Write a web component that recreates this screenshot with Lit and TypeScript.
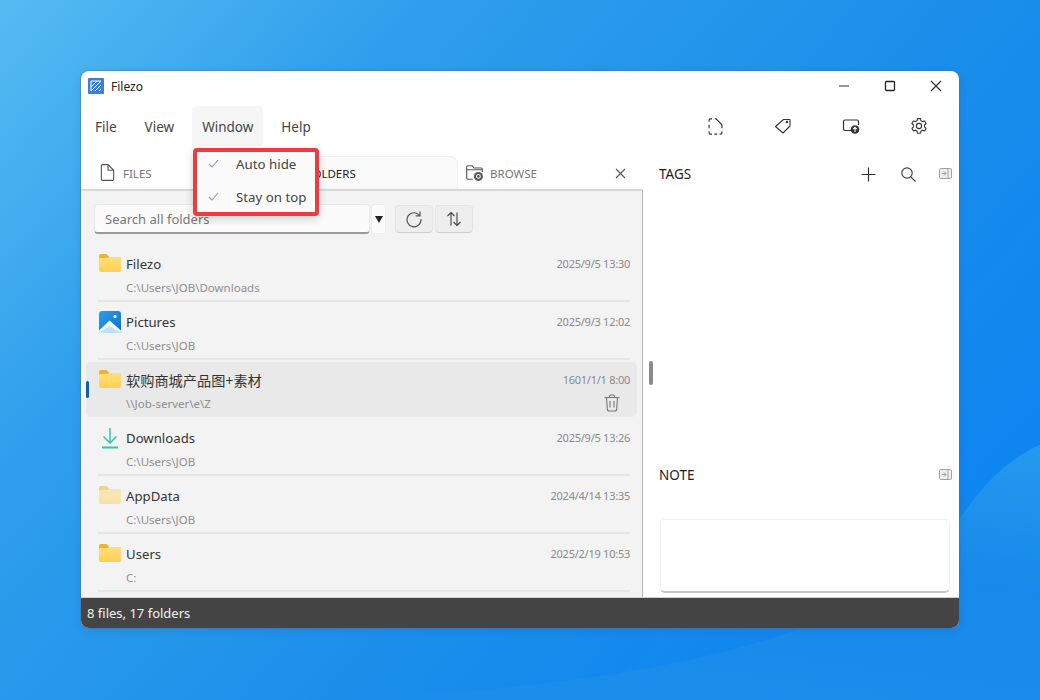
import { LitElement, html, css } from "lit";
import { customElement } from "lit/decorators.js";

const folder = (faded = false) => html`<svg class="ficon" viewBox="0 0 22 18" style="opacity:${faded ? 0.5 : 1}">
  <path d="M0 2a2 2 0 0 1 2-2h5.500l3 3H20a2 2 0 0 1 2 2v3H0z" fill="#f2b230"/>
  <path d="M0 5.500a1.500 1.500 0 0 1 1.500-1.500H8l2.500-1H20.500A1.500 1.500 0 0 1 22 4.500V16a2 2 0 0 1-2 2H2a2 2 0 0 1-2-2z" fill="url(#fg)"/>
</svg>`;
const pictures = html`<svg class="ficon pic" viewBox="0 0 22 22">
  <rect width="22" height="22" rx="3" fill="url(#pg)"/>
  <path d="M0 19.500 10.500 9.500 22 19.500V19a3 3 0 0 1-3 3H3a3 3 0 0 1-3-3z" fill="#fff"/>
  <path d="M1 21 10.500 15 21 21a3 3 0 0 1-2 1H3a3 3 0 0 1-2-1z" fill="#bfe0f6"/>
  <circle cx="16" cy="5.600" r="1.600" fill="#fff"/>
</svg>`;
const download = html`<svg class="ficon dl" viewBox="0 0 22 22" fill="none" stroke="#2cc6a6" stroke-width="1.500">
  <path d="M11 1v15M4.500 9.500 11 16l6.500-6.500"/><path d="M3 20.500h16" stroke-width="2"/>
</svg>`;

const rows = [
  { name: "Filezo", path: "C:\\Users\\JOB\\Downloads", date: "2025/9/5 13:30", icon: folder() },
  { name: "Pictures", path: "C:\\Users\\JOB", date: "2025/9/3 12:02", icon: pictures },
  { name: "软购商城产品图+素材", path: "\\\\Job-server\\e\\Z", date: "1601/1/1 8:00", icon: folder(), active: true },
  { name: "Downloads", path: "C:\\Users\\JOB", date: "2025/9/5 13:26", icon: download },
  { name: "AppData", path: "C:\\Users\\JOB", date: "2024/4/14 13:35", icon: folder(true) },
  { name: "Users", path: "C:", date: "2025/2/19 10:53", icon: folder() },
];

const collapse = html`<svg class="collapse" viewBox="0 0 13 11" fill="none" stroke="#999" stroke-width=".9">
  <rect x=".5" y=".5" width="12" height="10" rx="1.200" fill="#eee"/><path d="M9 .5v10M2.500 5.500h4.500M5 3.500 7 5.500 5 7.500"/>
</svg>`;

@customElement("app-root")
export class AppRoot extends LitElement {
  static styles = css`
    :host { display: block; position: relative; width: 1040px; height: 700px; overflow: hidden;
      font-family: "Noto Sans", "Noto Sans CJK SC", sans-serif; color: #333; background: #1c8de8; }
    .wall { position: absolute; inset: 0; width: 1040px; height: 700px; }
    .window { position: absolute; left: 81px; top: 71px; width: 878px; height: 557px; display: flex; flex-direction: column;
      background: #fff; border-radius: 8px; overflow: hidden; box-shadow: 0 0 0 1px rgba(90,110,140,.4), 0 2px 8px rgba(0,40,90,.12); }
    .title { height: 34px; display: flex; align-items: center; flex: none; padding: 0 0 4px 7px; box-sizing: border-box; font-size: 12px; color: #222; }
    .title .name { margin-left: 7px; }
    .logo { width: 16px; height: 16px; }
    .spacer { flex: 1; }
    .wc { width: 46px; height: 30px; display: flex; align-items: center; justify-content: center; }
    .wc svg { width: 12px; height: 12px; }
    .wcs { display: flex; }
    .menubar { height: 50px; flex: none; display: flex; align-items: flex-start; padding-left: 4px; }
    .menu { display: flex; gap: 8px; }
    .mi { height: 40px; margin-top: 1px; padding: 2px 10px 0; box-sizing: border-box; display: flex; align-items: center; justify-content: center;
      font-size: 13.500px; color: #444; border-radius: 4px; }
    .mi.on { background: #f6f6f6; }
    .tools { display: flex; padding-right: 6px; height: 42px; align-items: center; }
    .tool { width: 68px; display: flex; justify-content: center; }
    .tool svg { width: 18px; height: 18px; }
    .tool svg.big { width: 21px; height: 21px; }
    .body { flex: 1; display: flex; min-height: 0; }
    .left { width: 562px; flex: none; display: flex; flex-direction: column; }
    .tabs { height: 34px; flex: none; display: flex; padding-left: 10px; box-sizing: border-box; }
    .tab { width: 183.500px; display: flex; align-items: center; padding: 2px 0 0 8px; box-sizing: border-box; font-size: 11.500px; color: #777; position: relative; }
    .tab.on { background: #fafafa; border-radius: 8px 8px 0 0; color: #222; margin-top: 1px; padding-top: 1px; box-shadow: inset 0 0 0 1px #f2f2f2; }
    .tab svg.ti { width: 19px; height: 19px; margin: -2px 6px 0 -1px; flex: none; }
    .tab .x { position: absolute; right: 16px; width: 11px; height: 11px; }
    .pane { flex: 1; background: #f3f3f3; border-top: 2px solid #d8d8d8; border-right: 1px solid #b5b5b5; min-height: 0; overflow: hidden; box-sizing: border-box; }
    .bar { display: flex; padding: 13px 0 0 13px; height: 30px; align-items: flex-start; box-sizing: content-box; }
    .search { width: 276px; height: 30px; box-sizing: border-box; background: #fbfbfb; border: 1px solid #e8e8e8; border-bottom: 2px solid #9a9a9a; border-radius: 4px;
      font-size: 13px; color: #777; padding-left: 10px; display: flex; align-items: center; }
    .drop { width: 15px; height: 30px; margin-left: 1px; box-sizing: border-box; background: #fbfbfb; border: 1px solid #ececec; border-radius: 3px;
      display: flex; align-items: center; justify-content: center; }
    .drop i { width: 0; height: 0; border-left: 4.500px solid transparent; border-right: 4.500px solid transparent; border-top: 7px solid #222; }
    .btn { width: 38px; height: 28px; margin-top: 1px; box-sizing: border-box; background: #eeeeee; border: 1px solid #e4e4e4; border-bottom-color: #cfcfcf; border-radius: 4px;
      display: flex; align-items: center; justify-content: center; margin-left: 2px; }
    .btn.first { margin-left: 9px; }
    .btn svg { width: 18px; height: 18px; }
    .list { padding: 10px 5px 0 5px; display: flex; flex-direction: column; }
    .row { height: 58px; box-sizing: border-box; position: relative; padding: 0 7px 0 13px; flex: none; }
    .inner { display: grid; grid-template-columns: 1fr auto; grid-template-rows: 24px 24px; padding-top: 7px; margin-left: -1px; border-bottom: 2px solid #e6e6e6; height: 58px; box-sizing: border-box; }
    .row.active::before { content: ""; position: absolute; left: 0; right: 0; top: 2px; height: 54px; background: #e9e9e9; border-radius: 5px; box-shadow: 0 1px 1px rgba(0,0,0,.03); }
    .row.active::after { content: ""; position: absolute; left: 0; top: 21px; width: 3px; height: 17px; background: #0f5cab; border-radius: 2px; }
    .inner > * { position: relative; z-index: 1; }
    .row.active .inner { border-bottom-color: transparent; }
    .nm { display: flex; align-items: center; font-size: 13.200px; color: #333; padding-top: 1px; padding-left: 1px; }
    .row.active .nm { font-size: 14.200px; }
    .ficon { width: 22px; height: 18px; margin-right: 5px; flex: none; margin-top: -1px; }
    .ficon.pic, .ficon.dl { height: 22px; margin-top: 0; }
    .date { font-size: 11px; letter-spacing: -.25px; color: #8a8a8a; align-self: center; }
    .path { font-size: 11.500px; color: #8f8f8f; padding-left: 28px; align-self: center; }
    .del { width: 18px; height: 18px; justify-self: end; align-self: center; margin-right: 9px; }
    .right { flex: 1; position: relative; display: flex; flex-direction: column; padding: 0 9px 4px 16px; min-width: 0; }
    .rh { display: flex; align-items: center; font-size: 13.500px; color: #222; height: 38px; }
    .ra { display: flex; align-items: center; margin-left: auto; margin-right: -3px; }
    .ra svg.i { width: 17px; height: 17px; margin-right: 22px; }
    .ra svg.i.first { margin-right: 23px; }
    .collapse { width: 13px; height: 11px; margin: -2px 1px 0 0; }
    .tagspace { flex: 1; }
    .note { height: 74px; box-sizing: border-box; margin-top: 25px; margin-left: 1px; background: #fff; border: 1px solid #f0f0f0; border-bottom: 2px solid #c4c4c4; border-radius: 5px; }
    .grip { position: absolute; left: 6px; top: 206px; width: 4px; height: 24px; background: #8a8a8a; border-radius: 2px; }
    .status { height: 31px; flex: none; background: #444; color: #f2f2f2; font-size: 13px; display: flex; align-items: center; padding-left: 6px; border-top: 1px solid #d0d0d0; box-sizing: border-box; }
    .popup { position: absolute; left: 193px; top: 148px; width: 126px; height: 68px; box-sizing: border-box; background: #fbfbfb;
      border: 4px solid #ee3b3f; border-radius: 4px; box-shadow: 0 3px 8px rgba(0,0,0,.18); font-size: 13.300px; color: #444;
      display: flex; flex-direction: column; }
    .pi { height: 33px; flex: none; display: flex; align-items: center; }
    .pi:first-child { margin-top: -5px; }
    .pi svg { width: 11px; height: 9px; margin: 0 17px 0 11px; }
  `;

  render() {
    return html`
      <svg class="wall" viewBox="0 0 1040 700" preserveAspectRatio="none">
        <defs>
          <linearGradient id="wb" x1="0" y1="0" x2="1" y2="0.6">
            <stop offset="0" stop-color="#55bbf2"/><stop offset=".3" stop-color="#2f9eec"/><stop offset=".7" stop-color="#1a8eea"/><stop offset="1" stop-color="#0f85f0"/>
          </linearGradient>
          <linearGradient id="wv" x1="1" y1="0" x2="0.6" y2="1">
            <stop offset="0" stop-color="#259aee"/><stop offset=".5" stop-color="#1689ea"/><stop offset="1" stop-color="#1b8eec"/>
          </linearGradient>
          <linearGradient id="fg" x1="0" y1="0" x2="0" y2="1">
            <stop offset="0" stop-color="#ffdf7c"/><stop offset="1" stop-color="#ffd050"/>
          </linearGradient>
          <linearGradient id="pg" x1="0" y1="0" x2="1" y2="1">
            <stop offset="0" stop-color="#2aa0ea"/><stop offset="1" stop-color="#0f6fd0"/>
          </linearGradient>
        </defs>
        <rect width="1040" height="700" fill="url(#wb)"/>
        <path d="M300 700C640 690 880 640 960 518 985 482 1010 458 1040 445V700z" fill="url(#wv)"/>
      </svg>
      <div class="window">
        <div class="title">
          <svg class="logo" viewBox="0 0 16 16"><rect width="16" height="16" rx="1" fill="#3f7fcf"/>
            <path d="M3 3h10M3 3v10M3 9l6-6M3 13l10-10M7 13l6-6M11 13l2-2" stroke="#fff" stroke-width="1" fill="none"/></svg>
          <span class="name">Filezo</span>
          <span class="spacer"></span>
          <div class="wcs">
            <div class="wc"><svg viewBox="0 0 12 12"><path d="M1 6h10" stroke="#333" stroke-width="1.200"/></svg></div>
            <div class="wc"><svg viewBox="0 0 12 12"><rect x="1.500" y="1.500" width="9" height="9" rx="1" fill="none" stroke="#222" stroke-width="1.300"/></svg></div>
            <div class="wc"><svg viewBox="0 0 12 12"><path d="M1 1l10 10M11 1 1 11" stroke="#333" stroke-width="1.200"/></svg></div>
          </div>
        </div>
        <div class="menubar">
          <div class="menu">
            <div class="mi">File</div><div class="mi">View</div><div class="mi on">Window</div><div class="mi">Help</div>
          </div>
          <span class="spacer"></span>
          <div class="tools">
            <div class="tool"><svg class="big" viewBox="0 0 18 18" fill="none" stroke="#333" stroke-width="1">
              <path d="M3.500 5V3.500a1 1 0 0 1 1-1H6M3.500 7.500v3M3.500 13v1.500a1 1 0 0 0 1 1H6M8 15.500h2.500M12.500 15.500h1a1 1 0 0 0 1-1V13M14.500 10.500V7.500L9.500 2.500H8.500"/></svg></div>
            <div class="tool"><svg viewBox="0 0 18 18" fill="none" stroke="#333" stroke-width="1.100">
              <path d="M1.500 9.500 9.500 2.500H15.500a.5.5 0 0 1 .5.5V9L9 16z" stroke-linejoin="round"/><circle cx="13" cy="5" r=".7" fill="#333"/></svg></div>
            <div class="tool"><svg viewBox="0 0 18 18" fill="none" stroke="#333" stroke-width="1.200">
              <path d="M9 13.500H3a1.500 1.500 0 0 1-1.500-1.500V4.500A1.500 1.500 0 0 1 3 3h12a1.500 1.500 0 0 1 1.500 1.500V8"/>
              <circle cx="13" cy="12.500" r="4.300" fill="#333" stroke="none"/><path d="M13 15V10.500M11.200 12.200 13 10.400 14.800 12.200" stroke="#fff" stroke-width="1.100"/></svg></div>
            <div class="tool"><svg viewBox="0 0 18 18" fill="none" stroke="#333" stroke-width="1.100" stroke-linejoin="round">
              <path d="M7.500 1.600h3l.5 2.200 1.500.8 2.100-.7 1.500 2.600-1.600 1.500v1.800l1.600 1.500-1.500 2.600-2.100-.7-1.500.8-.5 2.200h-3l-.5-2.200-1.500-.8-2.100.7-1.500-2.600 1.600-1.500V8l-1.600-1.500 1.500-2.600 2.100.7 1.500-.8z"/>
              <circle cx="9" cy="9" r="2.600"/></svg></div>
          </div>
        </div>
        <div class="body">
          <div class="left">
            <div class="tabs">
              <div class="tab"><svg class="ti" viewBox="0 0 17 17" fill="none" stroke="#555" stroke-width="1" stroke-linejoin="round">
                <path d="M3 2.500a1 1 0 0 1 1-1h5l5 5v8a1 1 0 0 1-1 1H4a1 1 0 0 1-1-1zM9 1.500v5h5"/></svg>FILES</div>
              <div class="tab on"><svg class="ti" viewBox="0 0 17 17" fill="none" stroke="#555" stroke-width="1">
                <path d="M1.500 3.500h5l1.500 1.500h7.500v9h-14z"/></svg>FOLDERS</div>
              <div class="tab"><svg class="ti" viewBox="0 0 17 17" fill="none" stroke="#555" stroke-width="1">
                <path d="M7 14.500H2.500a1 1 0 0 1-1-1v-10a1 1 0 0 1 1-1h4l1.500 2h6.500a1 1 0 0 1 1 1V8M1.500 6h14"/>
                <circle cx="12" cy="12" r="4" fill="#555" stroke="none"/><circle cx="12" cy="12" r="1.700" fill="none" stroke="#fff" stroke-width=".9"/></svg>BROWSE
                <svg class="x" viewBox="0 0 11 11"><path d="M1 1l9 9M10 1 1 10" stroke="#555" stroke-width="1.100"/></svg></div>
            </div>
            <div class="pane">
              <div class="bar">
                <div class="search">Search all folders</div>
                <div class="drop"><i></i></div>
                <div class="btn first"><svg viewBox="0 0 18 18" fill="none" stroke="#555" stroke-width="1.200">
                  <path d="M14.600 5.500A7 7 0 1 0 16 9M15 1.500v4.300h-4.300"/></svg></div>
                <div class="btn"><svg viewBox="0 0 18 18" fill="none" stroke="#444" stroke-width="1.100">
                  <path d="M6 15.500V2.500M2.500 6l3.500-3.500L9.500 6M12 2.500v13M8.500 12l3.500 3.500 3.500-3.500"/></svg></div>
              </div>
              <div class="list">
                ${rows.map(
                  (r) => html`<div class="row ${r.active ? "active" : ""}">
                    <div class="inner">
                      <div class="nm">${r.icon}${r.name}</div>
                      <div class="date">${r.date}</div>
                      <div class="path">${r.path}</div>
                      ${r.active
                        ? html`<svg class="del" viewBox="0 0 18 18" fill="none" stroke="#777" stroke-width="1.100">
                            <path d="M1.500 3.500h15M6.500 3.500V2a1 1 0 0 1 1-1h3a1 1 0 0 1 1 1v1.500M3.500 3.500l.8 11.500a2 2 0 0 0 2 2h5.400a2 2 0 0 0 2-2l.8-11.500M7 7v6.500M11 7v6.500"/></svg>`
                        : html`<span></span>`}
                    </div>
                  </div>`
                )}
              </div>
            </div>
          </div>
          <div class="right">
            <div class="grip"></div>
            <div class="rh">TAGS
              <div class="ra">
                <svg class="i first" viewBox="0 0 17 17" fill="none" stroke="#333" stroke-width="1.200"><path d="M8.500 1.500v14M1.500 8.500h14"/></svg>
                <svg class="i" viewBox="0 0 17 17" fill="none" stroke="#444" stroke-width="1.200"><circle cx="7" cy="7" r="5.200"/><path d="M10.800 10.800 15.500 15.500"/></svg>
                ${collapse}
              </div>
            </div>
            <div class="tagspace"></div>
            <div class="rh">NOTE<div class="ra">${collapse}</div></div>
            <div class="note"></div>
          </div>
        </div>
        <div class="status">8 files, 17 folders</div>
      </div>
      <div class="popup">
        <div class="pi"><svg viewBox="0 0 11 9" fill="none" stroke="#999" stroke-width="1.100"><path d="M1 5l3 3 6-7"/></svg>Auto hide</div>
        <div class="pi"><svg viewBox="0 0 11 9" fill="none" stroke="#999" stroke-width="1.100"><path d="M1 5l3 3 6-7"/></svg>Stay on top</div>
      </div>
    `;
  }
}
